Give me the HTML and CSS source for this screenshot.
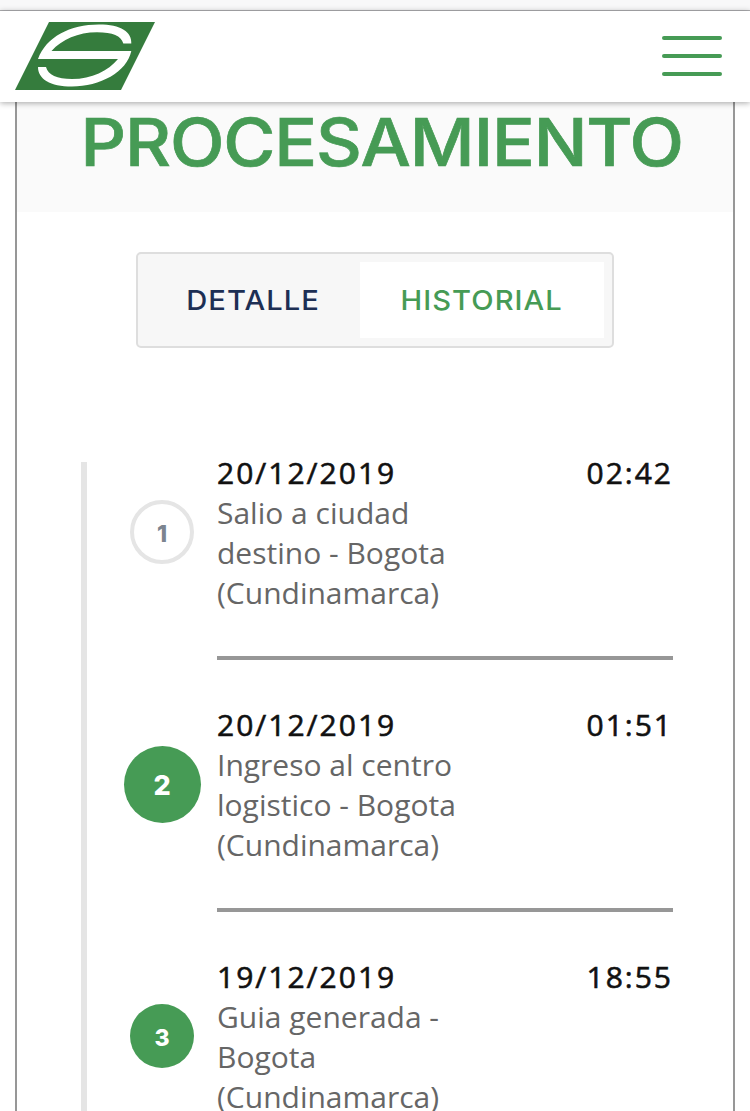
FILE: index.html
```
<!DOCTYPE html>
<html lang="es">
<head>
<meta charset="utf-8">
<title>Historial de envío</title>
<link rel="stylesheet" href="styles.css">
</head>
<body>
<div class="browser-edge"></div>
<header class="topbar">
  <svg class="logo" viewBox="0 0 140 68" width="140" height="68" aria-label="Logo">
    <path class="logo-field" d="M34 0H140L106 68H0Z"/>
    <path class="logo-letter" d="M116.300 21.500H108.300C106 14 98 10.300 82 10.300C63 10.300 47 17.500 36.500 29H116.300C112 50 85 64.500 57 64.500C35 64.500 23 57 23 45H31C33 53 42 57 57 57C77 57 93 49 103 37H23C31 15 55 2.500 84 2.500C106 2.500 117 10 116.300 21.500Z"/>
  </svg>
  <button class="menu" aria-label="Menú"><span></span><span></span><span></span></button>
</header>
<main class="card">
  <div class="status"><h1><span>PROCESAMIENTO</span></h1></div>
  <nav class="tabs">
    <a class="tab tab-detail"><span>DETALLE</span></a>
    <a class="tab tab-active"><span>HISTORIAL</span></a>
  </nav>
  <ol class="timeline">
    <li class="event">
      <div class="marker-cell"><span class="marker marker-outline">1</span></div>
      <div class="event-body">
        <div class="event-head"><time>20/12/2019</time><time>02:42</time></div>
        <p>Salio a ciudad<br>destino - Bogota<br>(Cundinamarca)</p>
      </div>
    </li>
    <li class="event">
      <div class="marker-cell"><span class="marker marker-large">2</span></div>
      <div class="event-body">
        <div class="event-head"><time>20/12/2019</time><time>01:51</time></div>
        <p>Ingreso al centro<br>logistico - Bogota<br>(Cundinamarca)</p>
      </div>
    </li>
    <li class="event">
      <div class="marker-cell"><span class="marker">3</span></div>
      <div class="event-body">
        <div class="event-head"><time>19/12/2019</time><time>18:55</time></div>
        <p>Guia generada -<br>Bogota<br>(Cundinamarca)</p>
      </div>
    </li>
  </ol>
</main>
</body>
</html>
```

FILE: styles.css
```
* { box-sizing: border-box; }
html { height: 100%; overflow: hidden; }
body {
  margin: 0;
  height: 1111px;
  overflow: hidden;
  display: flex;
  flex-direction: column;
  background: #fff;
  font-family: "Open Sans", sans-serif;
}
.browser-edge {
  flex: none;
  height: 11px;
  background: #f8f8f9;
  border-bottom: 1px solid #b0b0b3;
}
.topbar {
  flex: none;
  position: relative;
  z-index: 1;
  height: 91px;
  padding: 0 28px 2px 15px;
  display: flex;
  align-items: center;
  justify-content: space-between;
  background: #fff;
  box-shadow: 0 1px 6px rgba(0, 0, 0, .35);
}
.logo { display: block; }
.logo-field { fill: #357c3d; }
.logo-letter { fill: #fff; }
.menu {
  width: 60px;
  padding: 0;
  border: 0;
  background: none;
  display: flex;
  flex-direction: column;
  gap: 14px;
}
.menu span { height: 4px; border-radius: 2px; background: #469b55; }
.card {
  flex: 1 1 0;
  min-height: 0;
  overflow: hidden;
  margin: 0 15px;
  border: solid #979797;
  border-width: 0 2px;
  display: flex;
  flex-direction: column;
  align-items: center;
}
.status {
  flex: none;
  align-self: stretch;
  height: 110px;
  display: flex;
  justify-content: center;
  background: #fafafa;
}
h1 {
  margin: 0;
  padding-left: 14px;
  font: 500 65.500px/82px Inter, sans-serif;
  color: #469b55;
  white-space: nowrap;
  -webkit-text-stroke: .7px #469b55;
}
h1 span {
  display: inline-block;
  letter-spacing: -1px;
  transform: scaleX(1.085);
}
.tabs {
  flex: none;
  width: 478px;
  height: 96px;
  margin-top: 40px;
  padding: 8px;
  display: flex;
  background: #f7f7f7;
  border: 2px solid #dedede;
  border-radius: 5px;
}
.tab {
  flex: 1;
  display: flex;
  align-items: center;
  justify-content: center;
  padding-bottom: 1px;
  font: 500 27.500px/36px Inter, sans-serif;
  letter-spacing: 1px;
  color: #1d2f54;
}
.tab span { transform: scaleX(1.06); }
.tab-detail { flex: 0 0 214px; }
.tab-active { color: #469b55; background: #fff; }
.timeline {
  flex: none;
  align-self: stretch;
  margin: 114px 0 0 64px;
  padding: 0;
  list-style: none;
  border-left: 6px solid #e5e5e5;
}
.event {
  height: 252px;
  display: flex;
}
.marker-cell {
  flex: 0 0 130px;
  height: 140px;
  padding-left: 20px;
  display: flex;
  align-items: center;
  justify-content: center;
}
.marker {
  flex: none;
  width: 64px;
  height: 64px;
  padding-top: 3px;
  border-radius: 50%;
  display: flex;
  align-items: center;
  justify-content: center;
  background: #469b55;
  color: #fff;
  font: 800 23px/30px Inter, sans-serif;
}
.marker-outline {
  border: 4px solid #e5e5e5;
  background: #fff;
  color: #7c8490;
}
.marker-large { width: 77px; height: 77px; font-size: 27px; }
.event-body {
  width: 456px;
  height: 207px;
  margin-top: -9px;
  border-bottom: 4px solid #979797;
  font-size: 30px;
  line-height: 40px;
}
.event-head {
  display: flex;
  justify-content: space-between;
  color: #111;
  letter-spacing: 2px;
  -webkit-text-stroke: .6px #111;
}
.event-body p { margin: 0; color: #666; }
```
